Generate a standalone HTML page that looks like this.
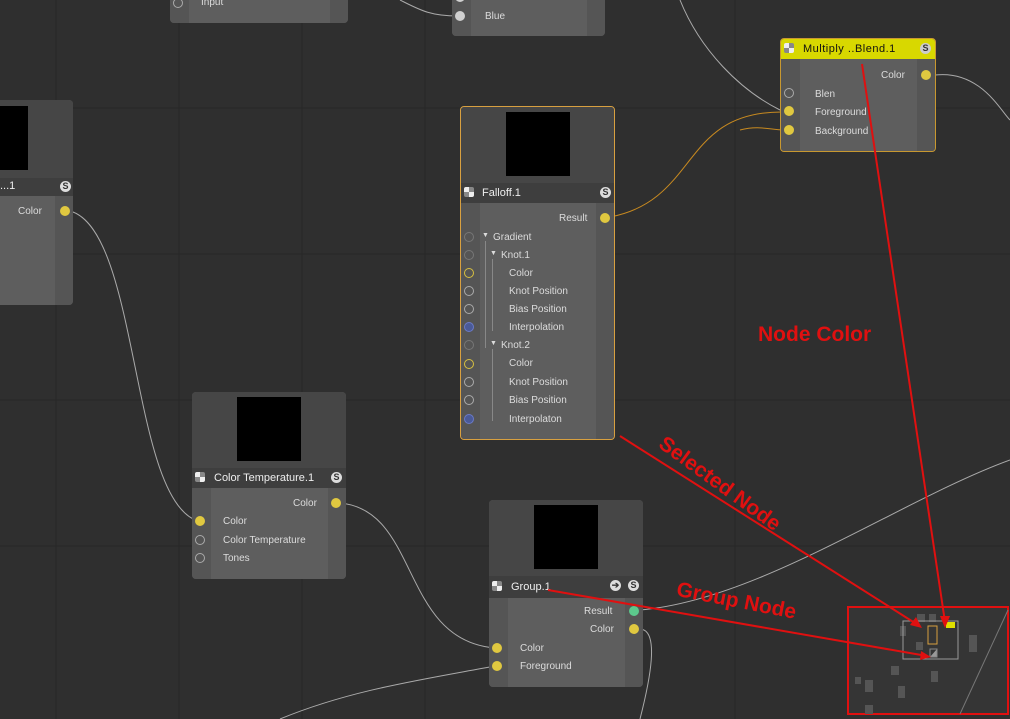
<!DOCTYPE html>
<html><head><style>
body{margin:0;width:1010px;height:719px;overflow:hidden;background:#2f2f2f;font-family:"Liberation Sans",sans-serif;position:relative}
.n{position:absolute;background:#5e5e5e;border-radius:4px;overflow:hidden}
.pv{position:absolute;left:0;right:0;top:0;background:#464646}
.blk{position:absolute;background:#000}
.hd{position:absolute;left:0;right:0;background:#3e3e3e;color:#eee;font-size:11px}
.ls{position:absolute;left:0;width:19px;background:#555}
.rs{position:absolute;right:0;width:18px;background:#555}
.t{position:absolute;font-size:10px;color:#dcdcdc;white-space:nowrap}
.s{position:absolute;width:10px;height:10px;margin:-1px 0 0 -1px;border-radius:50%;box-sizing:border-box}
.y{background:#e0c840}.g{background:#d0d0d0}.o{border:1.5px solid #aaa}.oy{border:1.5px solid #d8c040}.ob{border:1.5px solid #6a7ac8;background:#4a5a98}.od{border:1.5px solid #777}
.gn{background:#5cc88c}
.ic{position:absolute;width:11px;height:11px;border-radius:50%;background:#ddd;color:#333;font-size:9px;font-weight:bold;text-align:center;line-height:11px}
.ck{position:absolute;width:10px;height:10px;border-radius:2px;background:conic-gradient(#888 0 25%,#eee 0 50%,#888 0 75%,#eee 0)}
</style></head><body>
<svg width="1010" height="719" style="position:absolute;left:0;top:0">
<g stroke="#272727" stroke-width="1">
<line x1="56" y1="0" x2="56" y2="719"/><line x1="179" y1="0" x2="179" y2="719"/><line x1="302" y1="0" x2="302" y2="719"/><line x1="425" y1="0" x2="425" y2="719"/><line x1="735" y1="0" x2="735" y2="719"/>
<line x1="0" y1="108" x2="1010" y2="108"/><line x1="0" y1="254" x2="1010" y2="254"/><line x1="0" y1="400" x2="1010" y2="400"/><line x1="0" y1="546" x2="1010" y2="546"/>
</g>
<g fill="none" stroke="#aaa" stroke-width="1">
<path d="M400 0 C420 10,430 16,458 16"/>
<path d="M680 0 C700 50,740 90,780 110"/>
<path d="M935 75 C980 70,1000 110,1010 120"/>
<path d="M70 211 C140 230,130 500,198 521"/>
<path d="M340 503 C420 510,400 640,495 648"/>
<path d="M640 610 C760 600,900 500,1010 460"/>
<path d="M640 629 C660 630,650 680,640 719"/>
<path d="M280 719 C350 690,420 680,495 666"/>
</g>
<g fill="none" stroke="#c88a20" stroke-width="1">
<path d="M610 217 C700 200,680 110,785 112"/>
<path d="M740 130 C760 125,770 130,785 130"/>
</g>
</svg>
<div class="n" style="left:170px;top:-20px;width:178px;height:43px"><div class="ls" style="top:0;bottom:0"></div><div class="rs" style="top:0;bottom:0"></div><div class="s o" style="left:4px;top:19px"></div><div class="t" style="left:31px;top:17px">Input</div></div>
<div class="n" style="left:452px;top:-20px;width:153px;height:56px"><div class="ls" style="top:0;bottom:0"></div><div class="rs" style="top:0;bottom:0"></div><div class="s g" style="left:4px;top:13px"></div><div class="t" style="left:33px;top:12px">Gren</div><div class="s g" style="left:4px;top:32px"></div><div class="t" style="left:33px;top:31px">Blue</div></div>
<div class="n" style="left:-10px;top:100px;width:83px;height:205px"><div class="pv" style="height:78px"></div><div class="blk" style="left:0;top:6px;width:38px;height:64px"></div><div class="hd" style="top:78px;height:18px"><span style="position:absolute;left:10px;top:2px">...1</span></div><div class="ic" style="left:70px;top:81px">S</div><div class="rs" style="top:96px;bottom:0"></div><div class="t" style="left:28px;top:106px">Color</div><div class="s y" style="left:71px;top:107px"></div></div>
<div class="n" style="left:460px;top:106px;width:155px;height:334px;border:1px solid #d8a040;box-sizing:border-box">
<div class="pv" style="height:76px"></div><div class="blk" style="left:45px;top:5px;width:64px;height:64px"></div>
<div class="hd" style="top:76px;height:20px"><span style="position:absolute;left:21px;top:4px">Falloff.1</span></div><div class="ck" style="left:3px;top:80px"></div><div class="ic" style="left:139px;top:80px">S</div>
<div class="ls" style="top:96px;bottom:0"></div><div class="rs" style="top:96px;bottom:0"></div>
<div class="t" style="left:98px;top:106px">Result</div><div class="s y" style="left:140px;top:107px"></div>
<div style="position:absolute;left:24px;top:134px;width:1px;height:107px;background:#888"></div>
<div style="position:absolute;left:31px;top:152px;width:1px;height:72px;background:#888"></div>
<div style="position:absolute;left:31px;top:242px;width:1px;height:72px;background:#888"></div>
<div class="t" style="left:21px;top:125px;font-size:7px">▼</div><div class="t" style="left:32px;top:125px">Gradient</div>
<div class="t" style="left:29px;top:143px;font-size:7px">▼</div><div class="t" style="left:40px;top:143px">Knot.1</div>
<div class="t" style="left:29px;top:233px;font-size:7px">▼</div><div class="t" style="left:40px;top:233px">Knot.2</div>
<div class="t" style="left:48px;top:161px">Color</div><div class="t" style="left:48px;top:179px">Knot Position</div><div class="t" style="left:48px;top:197px">Bias Position</div><div class="t" style="left:48px;top:215px">Interpolation</div>
<div class="t" style="left:48px;top:251px">Color</div><div class="t" style="left:48px;top:270px">Knot Position</div><div class="t" style="left:48px;top:288px">Bias Position</div><div class="t" style="left:48px;top:307px">Interpolaton</div>
<div class="s od" style="left:4px;top:126px"></div><div class="s od" style="left:4px;top:144px"></div><div class="s oy" style="left:4px;top:162px"></div><div class="s o" style="left:4px;top:180px"></div><div class="s o" style="left:4px;top:198px"></div><div class="s ob" style="left:4px;top:216px"></div>
<div class="s od" style="left:4px;top:234px"></div><div class="s oy" style="left:4px;top:253px"></div><div class="s o" style="left:4px;top:271px"></div><div class="s o" style="left:4px;top:289px"></div><div class="s ob" style="left:4px;top:308px"></div>
</div>
<div class="n" style="left:780px;top:38px;width:156px;height:114px;border:1px solid #c89830;box-sizing:border-box">
<div class="hd" style="top:0;height:20px;background:#d8d800;color:#111"><span style="position:absolute;left:22px;top:4px;letter-spacing:.5px">Multiply ..Blend.1</span></div><div class="ck" style="left:3px;top:4px"></div><div class="ic" style="left:139px;top:4px;background:#ccc">S</div>
<div class="ls" style="top:20px;bottom:0"></div><div class="rs" style="top:20px;bottom:0"></div>
<div class="t" style="left:100px;top:31px">Color</div><div class="s y" style="left:141px;top:32px"></div>
<div class="s o" style="left:4px;top:50px"></div><div class="t" style="left:34px;top:50px">Blen</div>
<div class="s y" style="left:4px;top:68px"></div><div class="t" style="left:34px;top:68px">Foreground</div>
<div class="s y" style="left:4px;top:87px"></div><div class="t" style="left:34px;top:87px">Background</div>
</div>
<div class="n" style="left:192px;top:392px;width:154px;height:187px">
<div class="pv" style="height:76px"></div><div class="blk" style="left:45px;top:5px;width:64px;height:64px"></div>
<div class="hd" style="top:76px;height:20px"><span style="position:absolute;left:22px;top:4px">Color Temperature.1</span></div><div class="ck" style="left:3px;top:80px"></div><div class="ic" style="left:139px;top:80px">S</div>
<div class="ls" style="top:96px;bottom:0"></div><div class="rs" style="top:96px;bottom:0"></div>
<div class="t" style="left:101px;top:106px">Color</div><div class="s y" style="left:140px;top:107px"></div>
<div class="s y" style="left:4px;top:125px"></div><div class="t" style="left:31px;top:124px">Color</div>
<div class="s o" style="left:4px;top:144px"></div><div class="t" style="left:31px;top:143px">Color Temperature</div>
<div class="s o" style="left:4px;top:162px"></div><div class="t" style="left:31px;top:161px">Tones</div>
</div>
<div class="n" style="left:489px;top:500px;width:154px;height:187px">
<div class="pv" style="height:76px"></div><div class="blk" style="left:45px;top:5px;width:64px;height:64px"></div>
<div class="hd" style="top:76px;height:22px"><span style="position:absolute;left:22px;top:5px">Group.1</span></div><div class="ck" style="left:3px;top:81px"></div><div class="ic" style="left:121px;top:80px">➔</div><div class="ic" style="left:139px;top:80px">S</div>
<div class="ls" style="top:98px;bottom:0"></div><div class="rs" style="top:98px;bottom:0"></div>
<div class="t" style="left:95px;top:106px">Result</div><div class="s gn" style="left:141px;top:107px"></div>
<div class="t" style="left:101px;top:124px">Color</div><div class="s y" style="left:141px;top:125px"></div>
<div class="s y" style="left:4px;top:144px"></div><div class="t" style="left:31px;top:143px">Color</div>
<div class="s y" style="left:4px;top:162px"></div><div class="t" style="left:31px;top:161px">Foreground</div>
</div>
<div style="position:absolute;left:847px;top:606px;width:162px;height:109px;border:2px solid #e01010;box-sizing:border-box;background:#353535"></div>
<svg width="1010" height="719" style="position:absolute;left:0;top:0">
<g fill="#555"><rect x="917" y="614" width="8" height="8"/><rect x="929" y="614" width="7" height="8"/><rect x="900" y="626" width="6" height="10"/><rect x="916" y="642" width="7" height="8"/><rect x="969" y="635" width="8" height="17"/><rect x="891" y="666" width="8" height="9"/><rect x="931" y="671" width="7" height="11"/><rect x="855" y="677" width="6" height="7"/><rect x="865" y="680" width="8" height="12"/><rect x="898" y="686" width="7" height="12"/><rect x="865" y="705" width="8" height="9"/></g>
<rect x="903" y="621" width="55" height="38" fill="none" stroke="#999" stroke-width="1"/>
<rect x="928" y="626" width="9" height="18" fill="none" stroke="#d8a040" stroke-width="1"/>
<rect x="946" y="622" width="9" height="6" fill="#e0e000"/>
<polygon points="930,657 937,649 937,657" fill="#999"/><rect x="930" y="649" width="7" height="8" fill="none" stroke="#888"/>
<line x1="1008" y1="610" x2="960" y2="714" stroke="#777"/>
<g stroke="#e01010" stroke-width="2" fill="#e01010">
<line x1="862" y1="64" x2="945" y2="622"/>
<line x1="620" y1="436" x2="918" y2="625"/>
<line x1="548" y1="590" x2="927" y2="656"/>
</g>
<g fill="#e01010"><polygon points="945,628 940,616 950,616"/><polygon points="922,628 910,625 916,617"/><polygon points="931,657 920,660 921,651"/></g>
</svg>
<div style="position:absolute;left:758px;top:323px;color:#e01010;font-weight:bold;font-size:21px">Node Color</div>
<div style="position:absolute;left:668px;top:432px;color:#e01010;font-weight:bold;font-size:21px;transform:rotate(36deg);transform-origin:0 0;white-space:nowrap">Selected Node</div>
<div style="position:absolute;left:679px;top:578px;color:#e01010;font-weight:bold;font-size:21px;transform:rotate(11deg);transform-origin:0 0;white-space:nowrap">Group Node</div>
</body></html>
